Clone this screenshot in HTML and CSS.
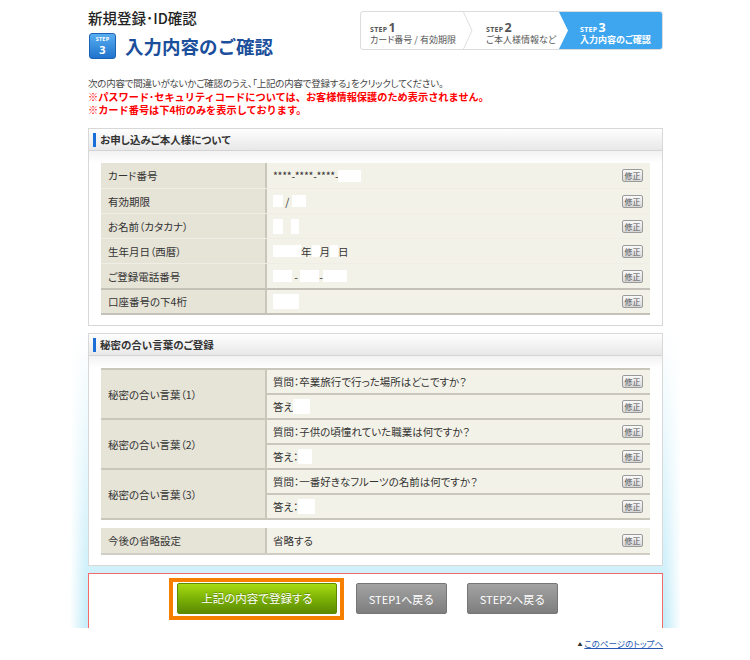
FILE: index.html
```html
<!DOCTYPE html>
<html lang="ja">
<head>
<meta charset="utf-8">
<title>新規登録・ID確認</title>
<link rel="stylesheet" href="styles.css">
</head>
<body>
<div class="page">
  <header class="top">
    <div class="title-block">
      <p class="site-title">新規登録･ID確認</p>
      <div class="page-heading">
        <div class="badge"><span class="badge-step">STEP</span><span class="badge-num">3</span></div>
        <h1>入力内容のご確認</h1>
      </div>
    </div>
    <div class="steps">
      <div class="step s1">
        <div class="step-no"><span class="sw">STEP</span><span class="sn">1</span></div>
        <div class="step-name">カード番号 / 有効期限</div>
        <svg class="chev" width="10" height="37" viewBox="0 0 10 37"><polyline points="0.5,0 9,18.5 0.5,37" fill="none" stroke="#dedede" stroke-width="1"/></svg>
      </div>
      <div class="step s2">
        <div class="step-no"><span class="sw">STEP</span><span class="sn">2</span></div>
        <div class="step-name">ご本人様情報など</div>
      </div>
      <div class="step s3">
        <div class="step-no"><span class="sw">STEP</span><span class="sn">3</span></div>
        <div class="step-name">入力内容のご確認</div>
      </div>
    </div>
  </header>

  <div class="intro">
    <p>次の内容で間違いがないかご確認のうえ、「上記の内容で登録する」をクリックしてください。</p>
    <p class="warn">※パスワード･セキュリティコードについては、お客様情報保護のため表示されません。</p>
    <p class="warn">※カード番号は下4桁のみを表示しております。</p>
  </div>

  <div class="stage">
    <section class="panel">
      <h2 class="panel-head"><span>お申し込みご本人様について</span></h2>
      <div class="panel-body">
        <div class="tbl1">
          <div class="row">
            <div class="lbl">カード番号</div>
            <div class="val"><span class="txt mono">****-****-****-<i class="mask" style="width:23px"></i></span><span class="fix">修正</span></div>
          </div>
          <div class="row">
            <div class="lbl">有効期限</div>
            <div class="val"><span class="txt"><i class="mask" style="width:10px"></i>&nbsp;/&nbsp;<i class="mask" style="width:14px"></i></span><span class="fix">修正</span></div>
          </div>
          <div class="row">
            <div class="lbl">お名前（カタカナ）</div>
            <div class="val"><span class="txt"><i class="mask tall" style="width:10px"></i><i class="gap8"></i><i class="mask tall" style="width:8px"></i></span><span class="fix">修正</span></div>
          </div>
          <div class="row">
            <div class="lbl">生年月日（西暦）</div>
            <div class="val"><span class="txt"><i class="mask" style="width:28px"></i>年<i class="mask" style="width:8px"></i>月<i class="mask" style="width:8px"></i>日</span><span class="fix">修正</span></div>
          </div>
          <div class="row">
            <div class="lbl">ご登録電話番号</div>
            <div class="val"><span class="txt"><i class="mask" style="width:19px"></i>&nbsp;-&nbsp;<i class="mask" style="width:19px"></i>-<i class="mask" style="width:24px"></i></span><span class="fix">修正</span></div>
          </div>
          <div class="row last">
            <div class="lbl">口座番号の下4桁</div>
            <div class="val"><span class="txt"><i class="mask tall" style="width:26px"></i></span><span class="fix">修正</span></div>
          </div>
        </div>
      </div>
    </section>

    <section class="panel p2">
      <h2 class="panel-head"><span>秘密の合い言葉のご登録</span></h2>
      <div class="panel-body">
        <div class="tbl2">
          <div class="grp">
            <div class="lbl">秘密の合い言葉（1）</div>
            <div class="subs">
              <div class="sub"><span class="txt">質問：卒業旅行で行った場所はどこですか？</span><span class="fix">修正</span></div>
              <div class="sub"><span class="txt">答え<i class="mask tall" style="width:17px"></i></span><span class="fix">修正</span></div>
            </div>
          </div>
          <div class="grp">
            <div class="lbl">秘密の合い言葉（2）</div>
            <div class="subs">
              <div class="sub"><span class="txt">質問：子供の頃憧れていた職業は何ですか？</span><span class="fix">修正</span></div>
              <div class="sub"><span class="txt">答え：<i class="mask tall" style="width:14px"></i></span><span class="fix">修正</span></div>
            </div>
          </div>
          <div class="grp end">
            <div class="lbl">秘密の合い言葉（3）</div>
            <div class="subs">
              <div class="sub"><span class="txt">質問：一番好きなフルーツの名前は何ですか？</span><span class="fix">修正</span></div>
              <div class="sub"><span class="txt">答え：<i class="mask tall" style="width:17px"></i></span><span class="fix">修正</span></div>
            </div>
          </div>
        </div>
        <div class="tbl3">
          <div class="lbl">今後の省略設定</div>
          <div class="val"><span class="txt">省略する</span><span class="fix">修正</span></div>
        </div>
      </div>
    </section>

    <div class="actions">
      <div class="primary-frame"><button class="btn-green" type="button">上記の内容で登録する</button></div>
      <button class="btn-gray" type="button">STEP1へ戻る</button>
      <button class="btn-gray b2" type="button">STEP2へ戻る</button>
    </div>
  </div>

  <div class="totop"><span class="tri">▲</span><a href="#">このページのトップへ</a></div>
</div>
</body>
</html>
```

FILE: styles.css
```css
* { box-sizing: border-box; }

body {
  margin: 0;
  background: #fff;
  color: #333;
  font-family: "Noto Sans CJK JP", "Noto Sans", sans-serif;
  font-feature-settings: "palt";
}

.page {
  width: 611px;
  margin-left: 70px;
}

/* ---------- header ---------- */
.top {
  display: flex;
  justify-content: space-between;
  align-items: flex-start;
  padding: 0 18px;
}

.site-title {
  margin: 0;
  padding-top: 9px;
  font-size: 14.5px;
  line-height: 18px;
  color: #222;
  font-weight: 500;
}

.page-heading {
  display: flex;
  align-items: center;
  gap: 9px;
  margin-top: 6px;
  margin-left: 1px;
}

.badge {
  width: 27px;
  height: 26px;
  border-radius: 3px;
  border: 1px solid #1c62b4;
  background: linear-gradient(#58aef0, #1f73cc);
  color: #fff;
  display: flex;
  flex-direction: column;
  align-items: center;
  justify-content: center;
  font-family: "Noto Sans", sans-serif;
  font-weight: bold;
  line-height: 1;
}
.badge-step { font-size: 5.5px; letter-spacing: 0.2px; }
.badge-num { font-size: 11px; margin-top: 1px; }

.page-heading h1 {
  margin: 0;
  font-size: 18.5px;
  line-height: 26px;
  font-weight: bold;
  color: #1b4f9c;
  font-feature-settings: normal;
}

/* steps indicator */
.steps {
  margin-top: 11px;
  width: 303px;
  height: 39px;
  border: 1px solid #dcdcdc;
  border-radius: 3px;
  display: flex;
  overflow: hidden;
  background: #fff;
}
.step {
  position: relative;
  padding-top: 7px;
  color: #555;
}
.s1 { width: 112px; padding-left: 9px; }
.s2 { width: 86px; padding-left: 13px; }
.s3 {
  flex: 1;
  padding-left: 21px;
  background: #3ea6ef;
  color: #fff;
  clip-path: polygon(0 0, 100% 0, 100% 100%, 0 100%, 9px 50%);
}
.chev { position: absolute; right: 0; top: 0; }
.step-no {
  height: 15px;
  line-height: 15px;
  font-family: "Noto Sans", sans-serif;
  font-weight: bold;
  white-space: nowrap;
  overflow: visible;
}
.sw { font-size: 7px; letter-spacing: 0.3px; margin-right: 1px; }
.sn { font-size: 12.5px; line-height: 12px; }
.step-name {
  font-size: 9px;
  line-height: 11px;
  white-space: nowrap;
}
.s3 .step-name { font-weight: bold; }

/* ---------- intro ---------- */
.intro {
  margin-top: 18px;
  padding: 0 18px;
}
.intro p {
  margin: 0;
  font-size: 9.5px;
  line-height: 13px;
  color: #444;
  white-space: nowrap;
  letter-spacing: -0.25px;
}
.intro .warn {
  color: #ff0000;
  font-weight: bold;
  font-size: 10.2px;
  letter-spacing: 0;
  font-feature-settings: normal;
}

/* ---------- stage / panels ---------- */
.stage {
  margin-top: 12px;
  padding: 0 18px;
  background:
    linear-gradient(to right, #fff 0, rgba(255,255,255,0) 16px, rgba(255,255,255,0) calc(100% - 16px), #fff 100%),
    linear-gradient(to bottom, #fff 0, #fff 40%, #c6edf9 100%);
}

.panel {
  border: 1px solid #d8d8d8;
  background: #fff;
}
.p2 { margin-top: 7px; }

.panel-head {
  margin: 0;
  height: 22px;
  padding-left: 4px;
  display: flex;
  align-items: center;
  background: linear-gradient(#fefefe, #e8e8e8);
  border-bottom: 1px solid #d4d4d4;
  font-size: 10.5px;
  font-weight: bold;
  color: #333;
}
.panel-head span {
  border-left: 3px solid #1a6ed8;
  padding-left: 4px;
  line-height: 14px;
}

.panel-body {
  padding: 12px 12px 10px;
  background: linear-gradient(#f2f2f2, #fff 12px);
}

.lbl {
  width: 164px;
  flex: none;
  background: #e6e3d7;
  padding-left: 7px;
  font-size: 10.5px;
  color: #333;
  display: flex;
  align-items: center;
}
.val, .sub {
  background: #f3f2e8;
  border-left: 2px solid #c9c7bc;
  padding: 0 7px 0 6px;
  display: flex;
  align-items: center;
  justify-content: space-between;
  font-size: 10.5px;
  color: #333;
}
.val { flex: 1; }
.txt {
  display: flex;
  align-items: center;
  white-space: nowrap;
}
.txt.mono { font-feature-settings: normal; letter-spacing: -0.3px; }
.mask {
  display: inline-block;
  height: 12px;
  background: #fff;
}
.mask.tall { height: 15px; }
.gap8 { display: inline-block; width: 8px; }

.fix {
  width: 21px;
  height: 13px;
  border: 1px solid #9a9a9a;
  border-radius: 2px;
  background: linear-gradient(#fafafa, #d6d6d6);
  font-size: 8px;
  line-height: 11px;
  text-align: center;
  color: #555;
  flex: none;
}

/* table 1 */
.row {
  display: flex;
  height: 25px;
  border-top: 1px solid #efede6;
}
.row:first-child { border-top: none; }
.row.last {
  height: 27px;
  border-top: 2px solid #c4c2b8;
  border-bottom: 2px solid #c4c2b8;
}

/* table 2 */
.grp {
  display: flex;
  border-top: 2px solid #c9c7bc;
}
.grp.end { border-bottom: 2px solid #c9c7bc; }
.subs {
  flex: 1;
  display: flex;
  flex-direction: column;
}
.sub { flex: none; height: 23px; }
.sub + .sub {
  height: 25px;
  border-top: 2px solid #c9c7bc;
}
.tbl3 {
  margin-top: 8px;
  display: flex;
  height: 27px;
  border-bottom: 2px solid #d0cec4;
}

/* ---------- actions ---------- */
.actions {
  margin-top: 7px;
  height: 55px;
  border: 1px solid #f26a6a;
  border-bottom: none;
  background: #fff;
  display: flex;
  align-items: center;
  padding: 0 0 5px 80px;
}
.primary-frame {
  border: 4px solid #f77f00;
  padding: 1px 3px 2px 4px;
  background: #fff;
}
.btn-green {
  display: block;
  width: 160px;
  height: 31px;
  border: 1px solid #5c8a00;
  border-radius: 2px;
  background: linear-gradient(#a8db12, #7cb206 50%, #5b8a00);
  color: #fff;
  font-family: inherit;
  font-feature-settings: "palt";
  font-size: 11.5px;
  text-shadow: 0 -1px 0 rgba(0,0,0,0.25);
  padding: 0;
}
.btn-gray {
  margin-left: 12px;
  width: 91px;
  height: 31px;
  border: 1px solid #767676;
  border-radius: 2px;
  background: linear-gradient(#a2a2a2, #7e7e7e);
  color: #fff;
  font-family: inherit;
  font-size: 11px;
  padding: 0;
}
.btn-gray.b2 { margin-left: 20px; }

/* ---------- to top ---------- */
.totop {
  margin-top: 8px;
  padding-right: 18px;
  text-align: right;
  font-size: 8.5px;
  line-height: 14px;
}
.tri {
  font-size: 5px;
  color: #333;
  vertical-align: 1px;
  margin-right: 2px;
}
.totop a {
  color: #2658b0;
  text-decoration: underline;
}
```
